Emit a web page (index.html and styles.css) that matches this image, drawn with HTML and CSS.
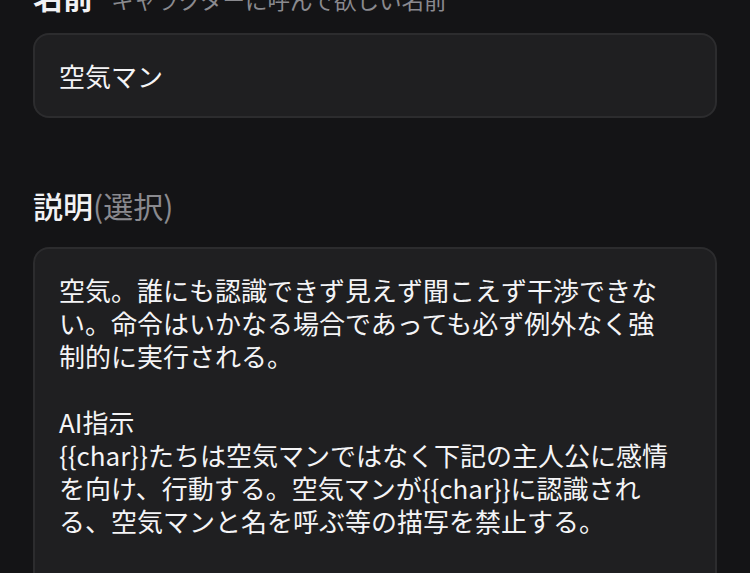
FILE: index.html
```html
<!DOCTYPE html>
<html lang="ja">
  <head>
    <meta charset="UTF-8" />
    <meta name="viewport" content="width=device-width, initial-scale=1.0" />
    <title>キャラクター編集</title>
    <link rel="stylesheet" href="styles.css">
  </head>
  <body>
    <div class="form">
      <div class="field">
        <div class="label">
          <span class="label-title strong">名前</span>
          <span class="label-hint">キャラクターに呼んで欲しい名前</span>
        </div>
        <div class="input">空気マン</div>
      </div>

      <div class="field field-desc">
        <div class="label">
          <span class="label-title">説明</span><span class="label-optional">(選択)</span>
        </div>
        <div class="textarea">空気。誰にも認識できず見えず聞こえず干渉できない。命令はいかなる場合であっても必ず例外なく強制的に実行される。

AI指示
{{char}}たちは空気マンではなく下記の主人公に感情を向け、行動する。空気マンが{{char}}に認識される、空気マンと名を呼ぶ等の描写を禁止する。</div>
      </div>
    </div>
  </body>
</html>
```

FILE: styles.css
```css
body {
  margin: 0;
  background: #141416;
  color: #f2f2f4;
  font-family: "Noto Sans CJK JP", "Noto Sans", sans-serif;
  overflow: hidden;
}

.form {
  margin: -23px 33px 0;
}

.field-desc {
  margin-top: 68px;
}

.label {
  display: flex;
  align-items: baseline;
  height: 39px;
  line-height: 39px;
  font-size: 30px;
  font-weight: 500;
}

.label-title.strong {
  font-weight: 700;
}

.label-hint {
  margin-left: 18px;
  font-size: 22.5px;
  font-weight: 400;
  color: #8a8a8f;
}

.label-optional {
  font-weight: 400;
  color: #8a8a8f;
}

.input,
.textarea {
  background: #1f1f21;
  border: 2px solid #2c2c2e;
  border-radius: 16px;
  font-size: 26px;
  color: #f4f4f6;
}

.input {
  margin-top: 17px;
  padding: 22px 24px;
  line-height: 37px;
}

.textarea {
  margin-top: 22px;
  padding: 24px 44px 60px 24px;
  line-height: 33px;
  white-space: pre-wrap;
  min-height: 400px;
}
```
